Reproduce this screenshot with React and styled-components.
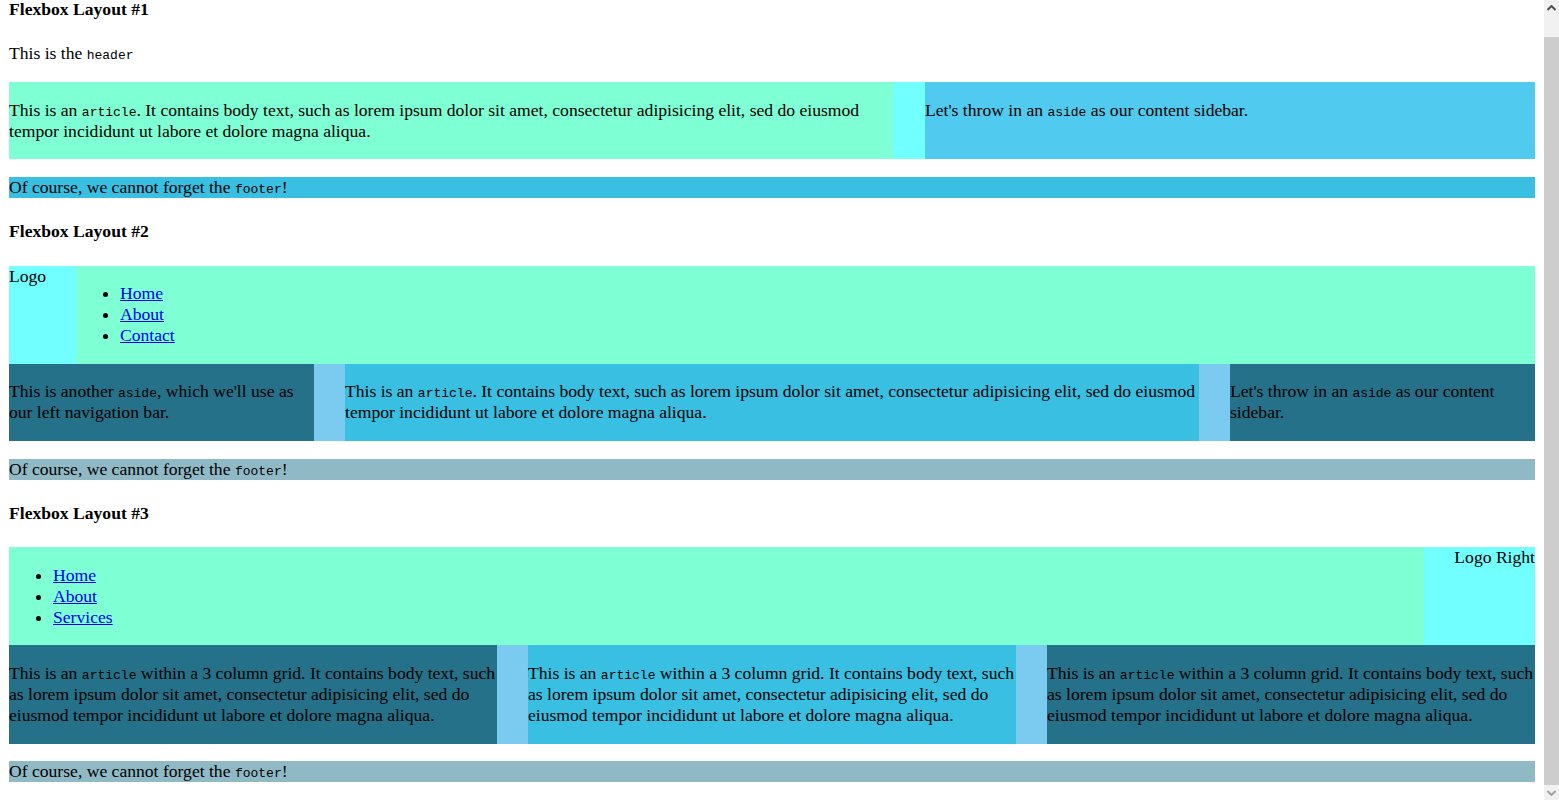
import React from 'react';
import styled, { createGlobalStyle } from 'styled-components';

const colors = {
  aqua: '#7fffd4',
  cyan: '#72ffff',
  sky: '#50cbef',
  blue: '#38bfe2',
  dark: '#257189',
  pale: '#7acbef',
  slate: '#90b9c6',
};

const GlobalStyle = createGlobalStyle`
  html, body {
    overflow: hidden;
  }
  body {
    margin: 0;
    background: #fff;
    color: #000;
    font-family: "Liberation Serif", "Times New Roman", serif;
    font-size: 17.6px;
    line-height: 21px;
  }
`;

const Page = styled.div`
  margin-top: -1px;
  padding: 0 24px 9px 9px;
`;

const Heading = styled.h4`
  margin: ${({ $first }) => ($first ? '0' : '23.4px')} 0 23.4px;
  font-size: 17.6px;
  font-weight: bold;
`;

const Code = styled.code`
  font-family: "Liberation Mono", "DejaVu Sans Mono", monospace;
  font-size: 13px;
  line-height: 1;
`;

const Para = styled.p`
  margin: 17.6px 0;
`;

const Row = styled.div`
  display: flex;
  background: ${({ $bg }) => $bg};
  column-gap: ${({ $gap }) => $gap}px;
`;

const Panel = styled.div`
  flex: ${({ $grow }) => $grow} 1 0;
  min-width: 0;
  background: ${({ $bg }) => $bg};
`;

const Footer = styled.footer`
  margin-top: 17.6px;
  background: ${({ $bg }) => $bg};
`;

const HeaderBar = styled.header`
  display: flex;
`;

const LogoBox = styled.div`
  flex: 0 0 ${({ $width }) => $width}px;
  background: ${colors.cyan};
  text-align: ${({ $align }) => $align || 'left'};
`;

const Nav = styled.nav`
  flex: 1 1 0;
  background: ${colors.aqua};
`;

const NavList = styled.ul`
  margin: 17.6px 0;
  padding-left: 44px;
  list-style: disc;
`;

const NavLink = styled.a`
  color: #0000ee;
  text-decoration: underline;
`;

// fake browser scrollbar, page in the shot is scrolled to the bottom
const ScrollTrack = styled.div`
  position: fixed;
  top: 0;
  right: 0;
  width: 15px;
  height: 100vh;
  display: flex;
  flex-direction: column;
  background: #f1f1f1;
`;

const ScrollArrow = styled.div`
  flex: 0 0 15px;
  display: flex;
  align-items: center;
  justify-content: center;
  color: ${({ $dim }) => ($dim ? '#a3a3a3' : '#505050')};
`;

const ScrollGap = styled.div`
  flex: 0 0 22px;
`;

const ScrollThumb = styled.div`
  flex: 1 1 0;
  background: #cdcdcd;
`;

const Chevron = ({ up }) => (
  <svg width="9" height="6" viewBox="0 0 9 6">
    <path
      d={up ? 'M0.5 5 L4.5 1 L8.5 5' : 'M0.5 1 L4.5 5 L8.5 1'}
      fill="none"
      stroke="currentColor"
      strokeWidth="2"
    />
  </svg>
);

const NavMenu = ({ items }) => (
  <Nav>
    <NavList>
      {items.map((item) => (
        <li key={item}>
          <NavLink href="#">{item}</NavLink>
        </li>
      ))}
    </NavList>
  </Nav>
);

const articleText = (
  <>
    This is an <Code>article</Code>. It contains body text, such as lorem ipsum dolor sit amet,
    consectetur adipisicing elit, sed do eiusmod tempor incididunt ut labore et dolore magna aliqua.
  </>
);

const gridText = (
  <>
    This is an <Code>article</Code> within a 3 column grid. It contains body text, such as lorem
    ipsum dolor sit amet, consectetur adipisicing elit, sed do eiusmod tempor incididunt ut labore
    et dolore magna aliqua.
  </>
);

const sidebarText = (
  <>
    Let's throw in an <Code>aside</Code> as our content sidebar.
  </>
);

const FooterNote = ({ bg }) => (
  <Footer $bg={bg}>
    Of course, we cannot forget the <Code>footer</Code>!
  </Footer>
);

export default function App() {
  return (
    <>
      <GlobalStyle />
      <Page>
        <section>
          <Heading $first>Flexbox Layout #1</Heading>
          <header>
            <Para>
              This is the <Code>header</Code>
            </Para>
          </header>
          <Row $bg={colors.cyan} $gap={32}>
            <Panel $grow={884} $bg={colors.aqua}>
              <Para>{articleText}</Para>
            </Panel>
            <Panel $grow={610} $bg={colors.sky}>
              <Para>{sidebarText}</Para>
            </Panel>
          </Row>
          <FooterNote bg={colors.blue} />
        </section>

        <section>
          <Heading>Flexbox Layout #2</Heading>
          <HeaderBar>
            <LogoBox $width={67}>Logo</LogoBox>
            <NavMenu items={['Home', 'About', 'Contact']} />
          </HeaderBar>
          <Row $bg={colors.pale} $gap={31}>
            <Panel $grow={305} $bg={colors.dark}>
              <Para>
                This is another <Code>aside</Code>, which we'll use as our left navigation bar.
              </Para>
            </Panel>
            <Panel $grow={854} $bg={colors.blue}>
              <Para>{articleText}</Para>
            </Panel>
            <Panel $grow={305} $bg={colors.dark}>
              <Para>{sidebarText}</Para>
            </Panel>
          </Row>
          <FooterNote bg={colors.slate} />
        </section>

        <section>
          <Heading>Flexbox Layout #3</Heading>
          <HeaderBar>
            <NavMenu items={['Home', 'About', 'Services']} />
            <LogoBox $width={111} $align="right">Logo Right</LogoBox>
          </HeaderBar>
          <Row $bg={colors.pale} $gap={31}>
            <Panel $grow={1} $bg={colors.dark}>
              <Para>{gridText}</Para>
            </Panel>
            <Panel $grow={1} $bg={colors.blue}>
              <Para>{gridText}</Para>
            </Panel>
            <Panel $grow={1} $bg={colors.dark}>
              <Para>{gridText}</Para>
            </Panel>
          </Row>
          <FooterNote bg={colors.slate} />
        </section>
      </Page>

      <ScrollTrack>
        <ScrollArrow>
          <Chevron up />
        </ScrollArrow>
        <ScrollGap />
        <ScrollThumb />
        <ScrollArrow $dim>
          <Chevron />
        </ScrollArrow>
      </ScrollTrack>
    </>
  );
}
